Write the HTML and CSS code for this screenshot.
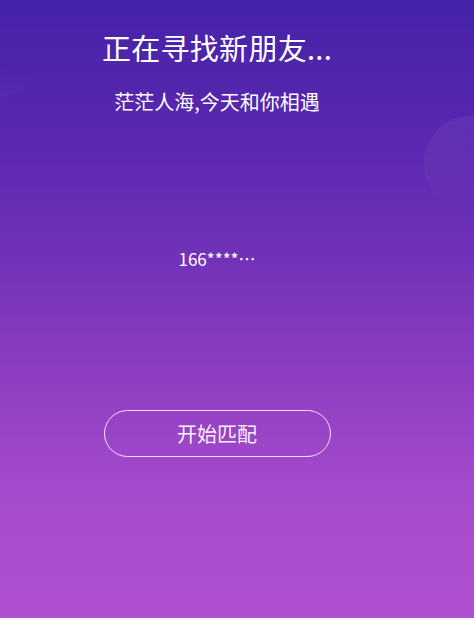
FILE: index.html
```html
<!DOCTYPE html>
<html lang="zh-CN">
<head>
<meta charset="utf-8">
<title>正在寻找新朋友</title>
<link rel="stylesheet" href="styles.css">
</head>
<body>
<div class="page">
  <div class="bubble bubble-left"></div>
  <div class="bubble bubble-right"></div>
  <div class="content">
    <h1 class="title">正在寻找新朋友...</h1>
    <p class="subtitle">茫茫人海,今天和你相遇</p>
    <p class="phone">166****…</p>
    <button class="match-btn" type="button">开始匹配</button>
  </div>
</div>
</body>
</html>
```
FILE: styles.css
```css
html, body {
  margin: 0;
  padding: 0;
}
body {
  font-family: "Noto Sans CJK SC", "Noto Sans", sans-serif;
  color: #fff;
}
.page {
  position: relative;
  width: 474px;
  height: 618px;
  overflow: hidden;
  background: linear-gradient(180deg, #4523a8 0%, #5a27b0 22%, #6f31b8 40%, #8a3cc0 58%, #a64bcd 80%, #b150d1 100%);
}
.bubble {
  position: absolute;
  border-radius: 50%;
}
.bubble-left {
  left: -70px;
  top: 20px;
  width: 115px;
  height: 78px;
  background: linear-gradient(200deg, rgba(255,255,255,0) 50%, rgba(255,255,255,0.05) 100%);
}
.bubble-right {
  left: 424px;
  top: 116px;
  width: 96px;
  height: 94px;
  background: linear-gradient(160deg, rgba(255,255,255,0.06) 0%, rgba(255,255,255,0.02) 60%, rgba(60,20,140,0.06) 100%);
}
.content {
  position: relative;
  width: 434px;
  display: flex;
  flex-direction: column;
  align-items: center;
  padding-top: 29px;
}
.title {
  margin: 0;
  font-size: 29px;
  line-height: 36px;
  font-weight: 400;
  letter-spacing: 0.3px;
}
.subtitle {
  margin: 25px 0 0;
  font-size: 20px;
  line-height: 24px;
}
.phone {
  margin: 135px 0 0;
  font-size: 17px;
  line-height: 20px;
}
.match-btn {
  margin-top: 141px;
  width: 227px;
  height: 47px;
  border: 1px solid rgba(255,255,255,0.85);
  border-radius: 24px;
  background: transparent;
  color: rgba(255,255,255,0.95);
  font-family: "Noto Sans CJK SC", "Noto Sans", sans-serif;
  font-size: 20px;
  padding: 0;
}
```
